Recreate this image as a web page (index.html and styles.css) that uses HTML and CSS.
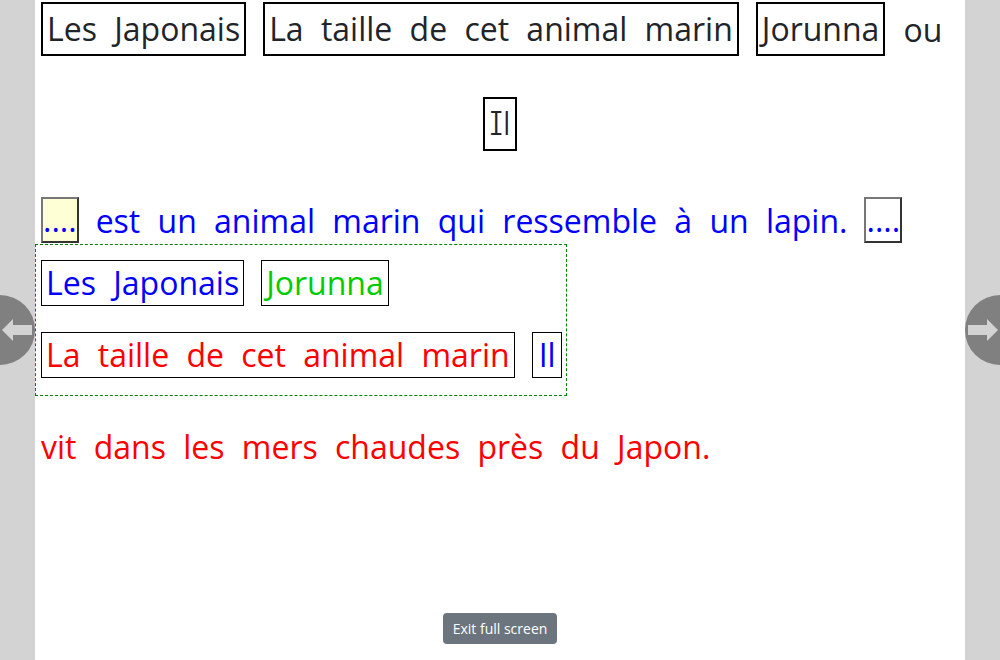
FILE: index.html
```html
<!DOCTYPE html>
<html lang="fr">
<head>
<meta charset="utf-8">
<title>Jorunna</title>
<link rel="stylesheet" href="styles.css">
</head>
<body>
<div class="page">
  <div class="row row-top">
    <span class="chip">Les Japonais</span>
    <span class="chip">La taille de cet animal marin</span>
    <span class="chip">Jorunna</span>
    <span class="plain">ou</span>
  </div>
  <div class="row row-center">
    <span class="chip chip-il">Il</span>
  </div>
  <div class="row row-sentence">
    <span class="slot slot-filled">....</span>
    <span class="blue-text">est un animal marin qui ressemble à un lapin.</span>
    <span class="slot">....</span>
  </div>
  <div class="bank">
    <div class="bank-row">
      <span class="tile blue">Les Japonais</span>
      <span class="tile green">Jorunna</span>
    </div>
    <div class="bank-row">
      <span class="tile red">La taille de cet animal marin</span>
      <span class="tile tile-il blue">Il</span>
    </div>
  </div>
  <div class="row row-last">
    <span class="red-text">vit dans les mers chaudes près du Japon.</span>
  </div>
  <div class="footer">
    <button class="exit">Exit full screen</button>
  </div>
</div>
<div class="nav nav-left">
  <svg width="30" height="24" viewBox="0 0 30 24"><path d="M0 12 L11 1 L11 7 L30 7 L30 17 L11 17 L11 23 Z" fill="#d3d3d3"/></svg>
</div>
<div class="nav nav-right">
  <svg width="30" height="24" viewBox="0 0 30 24"><path d="M30 12 L19 1 L19 7 L0 7 L0 17 L19 17 L19 23 Z" fill="#d3d3d3"/></svg>
</div>
</body>
</html>
```
FILE: styles.css
```css
html, body {
  margin: 0;
  padding: 0;
  height: 100%;
}
body {
  background: #d3d3d3;
  font-family: "Open Sans", "Noto Sans", sans-serif;
  overflow: hidden;
  position: relative;
}
.page {
  width: 930px;
  height: 660px;
  margin: 0 auto;
  background: #ffffff;
  display: flex;
  flex-direction: column;
  box-sizing: border-box;
  padding: 2px 6px 0 6px;
  font-size: 32px;
  word-spacing: 0.28em;
  white-space: nowrap;
}
.row {
  display: flex;
  align-items: center;
  gap: 17px;
}
.chip {
  border: 2px solid #000;
  padding: 0 4px;
  line-height: 50px;
  color: #212529;
}
.plain {
  color: #212529;
  margin-left: 1px;
}
.row-center {
  justify-content: center;
  margin-top: 41px;
}
.chip-il {
  font-family: "Inter", sans-serif;
  font-feature-settings: "cv08";
  font-weight: 300;
  padding: 0 5px;
}
.row-sentence {
  margin-top: 46px;
  color: #0000ff;
  gap: 17px;
}
.slot {
  border: 2px solid;
  border-color: #777 #333 #333 #777;
  line-height: 42px;
  padding: 0;
  color: #0000ff;
  background: #fff;
}
.slot-filled {
  background: #ffffd6;
}
.bank {
  margin: 1px 0 0 -6px;
  width: 532px;
  height: 152px;
  box-sizing: border-box;
  border: 1px dashed #008000;
  padding: 15px 5px 0 5px;
  display: flex;
  flex-direction: column;
  gap: 26px;
}
.bank-row {
  display: flex;
  gap: 17px;
}
.tile {
  border: 1px solid #000;
  padding: 0 4px;
  line-height: 44px;
}
.tile-il {
  padding: 0 5px 0 6px;
}
.blue { color: #0000ff; }
.green { color: #00cc00; }
.red { color: #ff0000; }
.row-last {
  margin-top: 29px;
  color: #ff0000;
}
.footer {
  margin-top: auto;
  display: flex;
  justify-content: center;
  padding-bottom: 16px;
}
.exit {
  background: #6c757d;
  color: #fff;
  border: none;
  border-radius: 4px;
  font-family: "Open Sans", "Noto Sans", sans-serif;
  font-size: 14px;
  padding: 6px 10px;
  word-spacing: normal;
}
.nav {
  position: absolute;
  top: 295px;
  width: 70px;
  height: 70px;
  border-radius: 50%;
  background: #808080;
  display: flex;
  align-items: center;
}
.nav-left {
  left: -35px;
  justify-content: flex-end;
  padding-right: 3px;
  box-sizing: border-box;
}
.nav-right {
  right: -35px;
  justify-content: flex-start;
  padding-left: 3px;
  box-sizing: border-box;
}
```
